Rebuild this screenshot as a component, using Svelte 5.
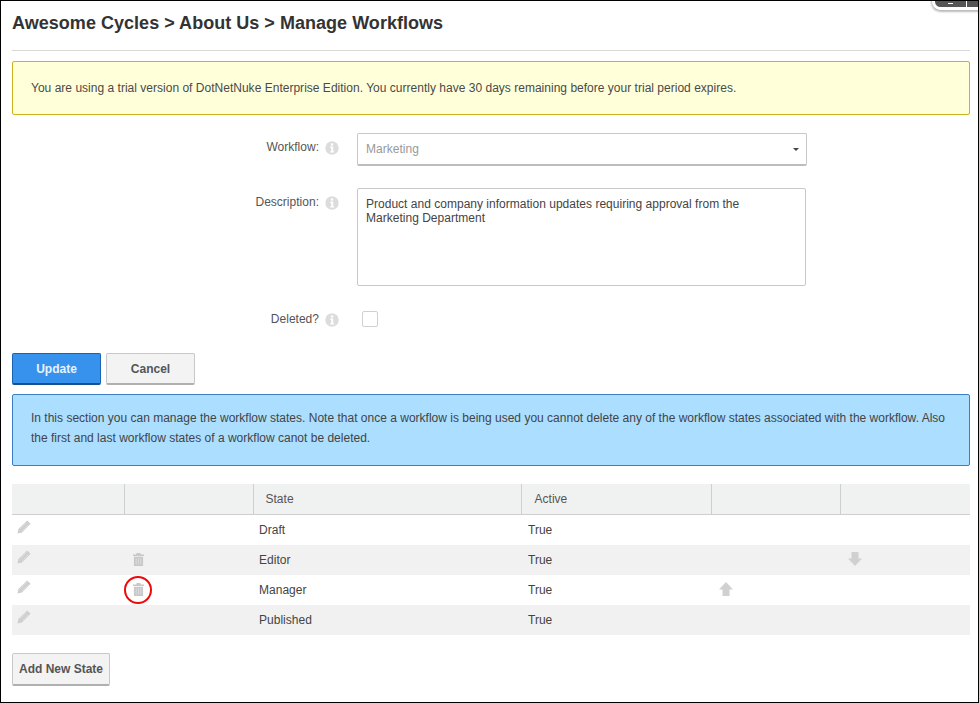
<script>
  const rows = [
    { state: 'Draft', active: 'True', del: false, up: false, down: false, ring: false },
    { state: 'Editor', active: 'True', del: true, up: false, down: true, ring: false },
    { state: 'Manager', active: 'True', del: true, up: true, down: false, ring: true },
    { state: 'Published', active: 'True', del: false, up: false, down: false, ring: false }
  ];
</script>

{#snippet info()}
  <svg class="info" viewBox="0 0 14 14" width="14" height="14">
    <circle cx="7" cy="7" r="6.7" fill="#dcdcdc" />
    <rect x="5.9" y="2.4" width="2.3" height="2.2" fill="#fff" />
    <path d="M5.2 5.6h3v4.6h1v1.3H5.2v-1.3h1V6.9h-1z" fill="#fff" />
  </svg>
{/snippet}

<div class="page">
  <div class="corner"><span class="seg one"></span><span class="seg two"></span></div>

  <h1>Awesome Cycles &gt; About Us &gt; Manage Workflows</h1>

  <div class="note warn">You are using a trial version of DotNetNuke Enterprise Edition. You currently have 30 days remaining before your trial period expires.</div>

  <div class="form">
    <div class="row first">
      <div class="label"><span>Workflow:</span>{@render info()}</div>
      <div class="select">
        <span>Marketing</span>
        <i class="caret"></i>
      </div>
    </div>
    <div class="row second">
      <div class="label"><span>Description:</span>{@render info()}</div>
      <div class="textarea">Product and company information updates requiring approval from the Marketing Department</div>
    </div>
    <div class="row third">
      <div class="label"><span>Deleted?</span>{@render info()}</div>
      <div class="check"></div>
    </div>
  </div>

  <div class="actions">
    <button class="btn primary">Update</button>
    <button class="btn">Cancel</button>
  </div>

  <div class="note infobox">In this section you can manage the workflow states. Note that once a workflow is being used you cannot delete any of the workflow states associated with the workflow. Also the first and last workflow states of a workflow canot be deleted.</div>

  <table>
    <colgroup>
      <col class="c1" /><col class="c2" /><col class="c3" /><col class="c4" /><col class="c5" /><col class="c6" />
    </colgroup>
    <thead>
      <tr><th></th><th></th><th>State</th><th class="activeh">Active</th><th></th><th></th></tr>
    </thead>
    <tbody>
      {#each rows as r}
        <tr>
          <td class="icon">
            <svg class="pencil" viewBox="0 0 14 14" width="14" height="14">
              <path d="M10.2 .4 13.6 3.8 5 12.6 .5 13.5 1.4 9z" fill="#cfcfcf" />
              <path d="M3.2 8.8 9.5 2.5M5.2 10.8 11.5 4.5" stroke="#e4e4e4" stroke-width=".6" />
            </svg>
          </td>
          <td class="icon trashcell">
            {#if r.del}
              <span class="trashwrap" class:ring={r.ring}>
                <svg viewBox="0 0 12 14" width="11" height="13">
                  <path d="M4 0h4l.6 1.6H12v1.6H0V1.6h3.4zM1 4h10v10H1z" fill="#c8c8c8" />
                  <path d="M3.5 5.5v7M6 5.5v7M8.5 5.5v7" stroke="#e2e2e2" stroke-width=".8" />
                </svg>
              </span>
            {/if}
          </td>
          <td class="text">{r.state}</td>
          <td class="text active">{r.active}</td>
          <td class="icon arrow">
            {#if r.up}
              <svg viewBox="0 0 14 14" width="14" height="14"><path d="M7 0 14 7.5H10.5V14H3.5V7.5H0z" fill="#d0d0d0" /></svg>
            {/if}
          </td>
          <td class="icon arrow">
            {#if r.down}
              <svg viewBox="0 0 14 14" width="14" height="14"><path d="M7 14 14 6.5H10.5V0H3.5V6.5H0z" fill="#d0d0d0" /></svg>
            {/if}
          </td>
        </tr>
      {/each}
    </tbody>
  </table>

  <button class="btn add">Add New State</button>
</div>

<style>
  :global(body) {
    margin: 0;
    background: #fff;
  }
  .page {
    position: relative;
    box-sizing: border-box;
    width: 979px;
    height: 703px;
    border: 1px solid #000;
    padding: 0 8px 0 11px;
    overflow: hidden;
    font-family: "Liberation Sans", Arial, sans-serif;
    font-size: 12px;
    letter-spacing: .015px;
    color: #444;
  }
  .corner {
    position: absolute;
    top: -8px;
    right: -10px;
    width: 56px;
    height: 17px;
    box-sizing: border-box;
    background: #555;
    border: 3px solid #fff;
    border-radius: 9px;
    box-shadow: 0 1px 2px 1px #bbb;
  }
  .seg {
    position: absolute;
    background: #fff;
  }
  .seg.one { left: 13px; top: 7px; width: 5px; height: 1px; }
  .seg.two { left: 31px; top: 0; width: 1px; height: 12px; }
  h1 {
    margin: 0;
    padding: 12px 0 16px;
    height: 50px;
    box-sizing: border-box;
    border-bottom: 1px solid #d9d9d9;
    font-size: 18px;
    line-height: 21px;
    font-weight: bold;
    letter-spacing: .03px;
    color: #333;
  }
  .note {
    box-sizing: border-box;
    border-radius: 2px;
    padding: 0 18px;
    line-height: 20px;
  }
  .warn {
    margin-top: 10px;
    height: 54px;
    padding-top: 16px;
    background: #ffffd9;
    border: 1px solid #cdb31c;
    color: #4a4a4a;
  }
  .form {
    padding-top: 18px;
  }
  .row {
    display: grid;
    grid-template-columns: 327px 1fr;
    column-gap: 18px;
    align-items: start;
  }
  .row.second { margin-top: 22px; }
  .row.third { margin-top: 25px; }
  .label {
    display: flex;
    justify-content: flex-end;
    align-items: center;
    gap: 7px;
    height: 14px;
    margin-top: 7px;
    padding-left: 1px;
    color: #555;
  }
  .third .label { margin-top: 1px; }
  .label span { position: relative; left: 1px; }
  .info { flex: none; margin-top: 2px; }
  .select {
    position: relative;
    box-sizing: border-box;
    width: 450px;
    height: 33px;
    display: flex;
    align-items: center;
    padding: 0 8px 1px;
    border: 1px solid #c8c8c8;
    border-bottom: 2px solid #bdbdbd;
    border-radius: 2px;
    color: #999;
  }
  .caret {
    position: absolute;
    right: 7px;
    top: 14px;
    border: 3px solid transparent;
    border-top: 3px solid #444;
    border-bottom: 0;
  }
  .textarea {
    box-sizing: border-box;
    width: 449px;
    height: 98px;
    padding: 8px 60px 8px 8px;
    border: 1px solid #c8c8c8;
    border-radius: 2px;
    line-height: 14px;
    color: #444;
  }
  .check {
    box-sizing: border-box;
    width: 16px;
    height: 16px;
    margin-left: 5px;
    border: 1px solid #d0d0d0;
    border-radius: 2px;
  }
  .actions {
    display: flex;
    gap: 5px;
    margin-top: 26px;
  }
  .btn {
    box-sizing: border-box;
    width: 89px;
    height: 32px;
    padding: 0;
    font-family: inherit;
    font-size: 12px;
    font-weight: bold;
    color: #555;
    background: #f3f3f3;
    border: 1px solid #c8c8c8;
    border-bottom: 2px solid #b0b0b0;
    border-radius: 2px;
  }
  .btn.primary {
    background: #3792ed;
    border-color: #1b63ad;
    border-bottom-color: #15528f;
    color: #e8f2fc;
  }
  .infobox {
    margin-top: 9px;
    height: 72px;
    padding-top: 13px;
    background: #abdeff;
    border: 1px solid #3a7fc4;
    color: #444;
    letter-spacing: .005px;
  }
  table {
    width: 958px;
    margin-top: 18px;
    border-collapse: collapse;
    table-layout: fixed;
  }
  .c1 { width: 112px; }
  .c2 { width: 129px; }
  .c3 { width: 268px; }
  .c4 { width: 190px; }
  .c5 { width: 129px; }
  .c6 { width: 130px; }
  th {
    height: 30px;
    padding: 0 0 0 12px;
    background: #f0f1f1;
    border-bottom: 1px solid #cfcfcf;
    font-weight: normal;
    text-align: left;
    color: #555;
    box-sizing: content-box;
  }
  th.activeh { padding-left: 13px; }
  th:not(:last-child) {
    border-right: 1px solid #cfcfcf;
  }
  td {
    height: 30px;
    padding: 0;
    box-sizing: border-box;
  }
  tbody tr:nth-child(even) td {
    background: #f1f1f1;
  }
  td.text {
    padding-left: 6px;
    color: #444;
  }
  td.text.active { padding-left: 7px; }
  td.icon {
    vertical-align: top;
    line-height: 0;
  }
  .pencil {
    margin: 5px 0 0 5px;
  }
  .trashwrap {
    display: inline-flex;
    align-items: center;
    justify-content: center;
    box-sizing: border-box;
    width: 28px;
    height: 28px;
    margin: 1px 0 0 0;
    border: 2px solid transparent;
    border-radius: 50%;
  }
  .trashwrap.ring {
    border-color: #ee0a0a;
  }
  .arrow svg {
    margin: 7px 0 0 8px;
  }
  .btn.add {
    display: block;
    width: 98px;
    height: 33px;
    margin-top: 18px;
  }
</style>
